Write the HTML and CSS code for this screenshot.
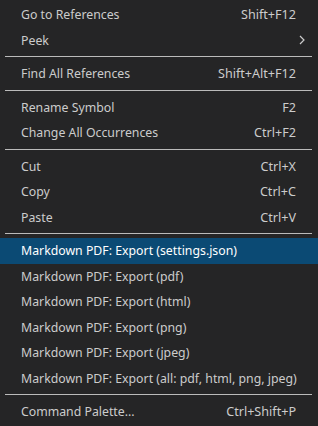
FILE: index.html
```html
<!DOCTYPE html>
<html lang="en">
<head>
    <meta charset="UTF-8">
    <meta name="viewport" content="width=device-width, initial-scale=1.0">
    <title>Context Menu</title>
    <link rel="stylesheet" href="styles.css">
</head>
<body>
<div class="menu">
    <div class="item"><span>Go to References</span><span class="keys">Shift+F12</span></div>
    <div class="item"><span>Peek</span>
        <svg class="chevron" width="6" height="10" viewBox="0 0 6 10"><path d="M1 1 L5 5 L1 9" fill="none" stroke="#cccccc" stroke-width="1.2"/></svg>
    </div>
    <div class="sep"></div>
    <div class="item"><span>Find All References</span><span class="keys">Shift+Alt+F12</span></div>
    <div class="sep"></div>
    <div class="item"><span>Rename Symbol</span><span class="keys">F2</span></div>
    <div class="item"><span>Change All Occurrences</span><span class="keys">Ctrl+F2</span></div>
    <div class="sep"></div>
    <div class="item"><span>Cut</span><span class="keys">Ctrl+X</span></div>
    <div class="item"><span>Copy</span><span class="keys">Ctrl+C</span></div>
    <div class="item"><span>Paste</span><span class="keys">Ctrl+V</span></div>
    <div class="sep"></div>
    <div class="item active"><span>Markdown PDF: Export (settings.json)</span></div>
    <div class="item"><span>Markdown PDF: Export (pdf)</span></div>
    <div class="item"><span>Markdown PDF: Export (html)</span></div>
    <div class="item"><span>Markdown PDF: Export (png)</span></div>
    <div class="item"><span>Markdown PDF: Export (jpeg)</span></div>
    <div class="item"><span>Markdown PDF: Export (all: pdf, html, png, jpeg)</span></div>
    <div class="sep"></div>
    <div class="item"><span>Command Palette...</span><span class="keys">Ctrl+Shift+P</span></div>
</div>
</body>
</html>
```

FILE: styles.css
```css
body {
    margin: 0;
    background-color: #252526;
    font-family: "Noto Sans", sans-serif;
    font-size: 12.3px;
    color: #cccccc;
}

.menu {
    padding-top: 2px;
    width: 318px;
    height: 426px;
    box-sizing: border-box;
    background-color: #252526;
    overflow: hidden;
}

.item {
    display: flex;
    justify-content: space-between;
    align-items: center;
    height: 25.5px;
    padding: 0 22px 0 21px;
    white-space: nowrap;
}

.item.active {
    background-color: #0b4a74;
    color: #ffffff;
}

.keys {
    font-size: 12.6px;
    color: #cccccc;
}

.chevron {
    margin-right: -9px;
}

.sep {
    height: 1px;
    margin: 3px 6px 4px 5px;
    background-color: #bbbbbb;
}
```
